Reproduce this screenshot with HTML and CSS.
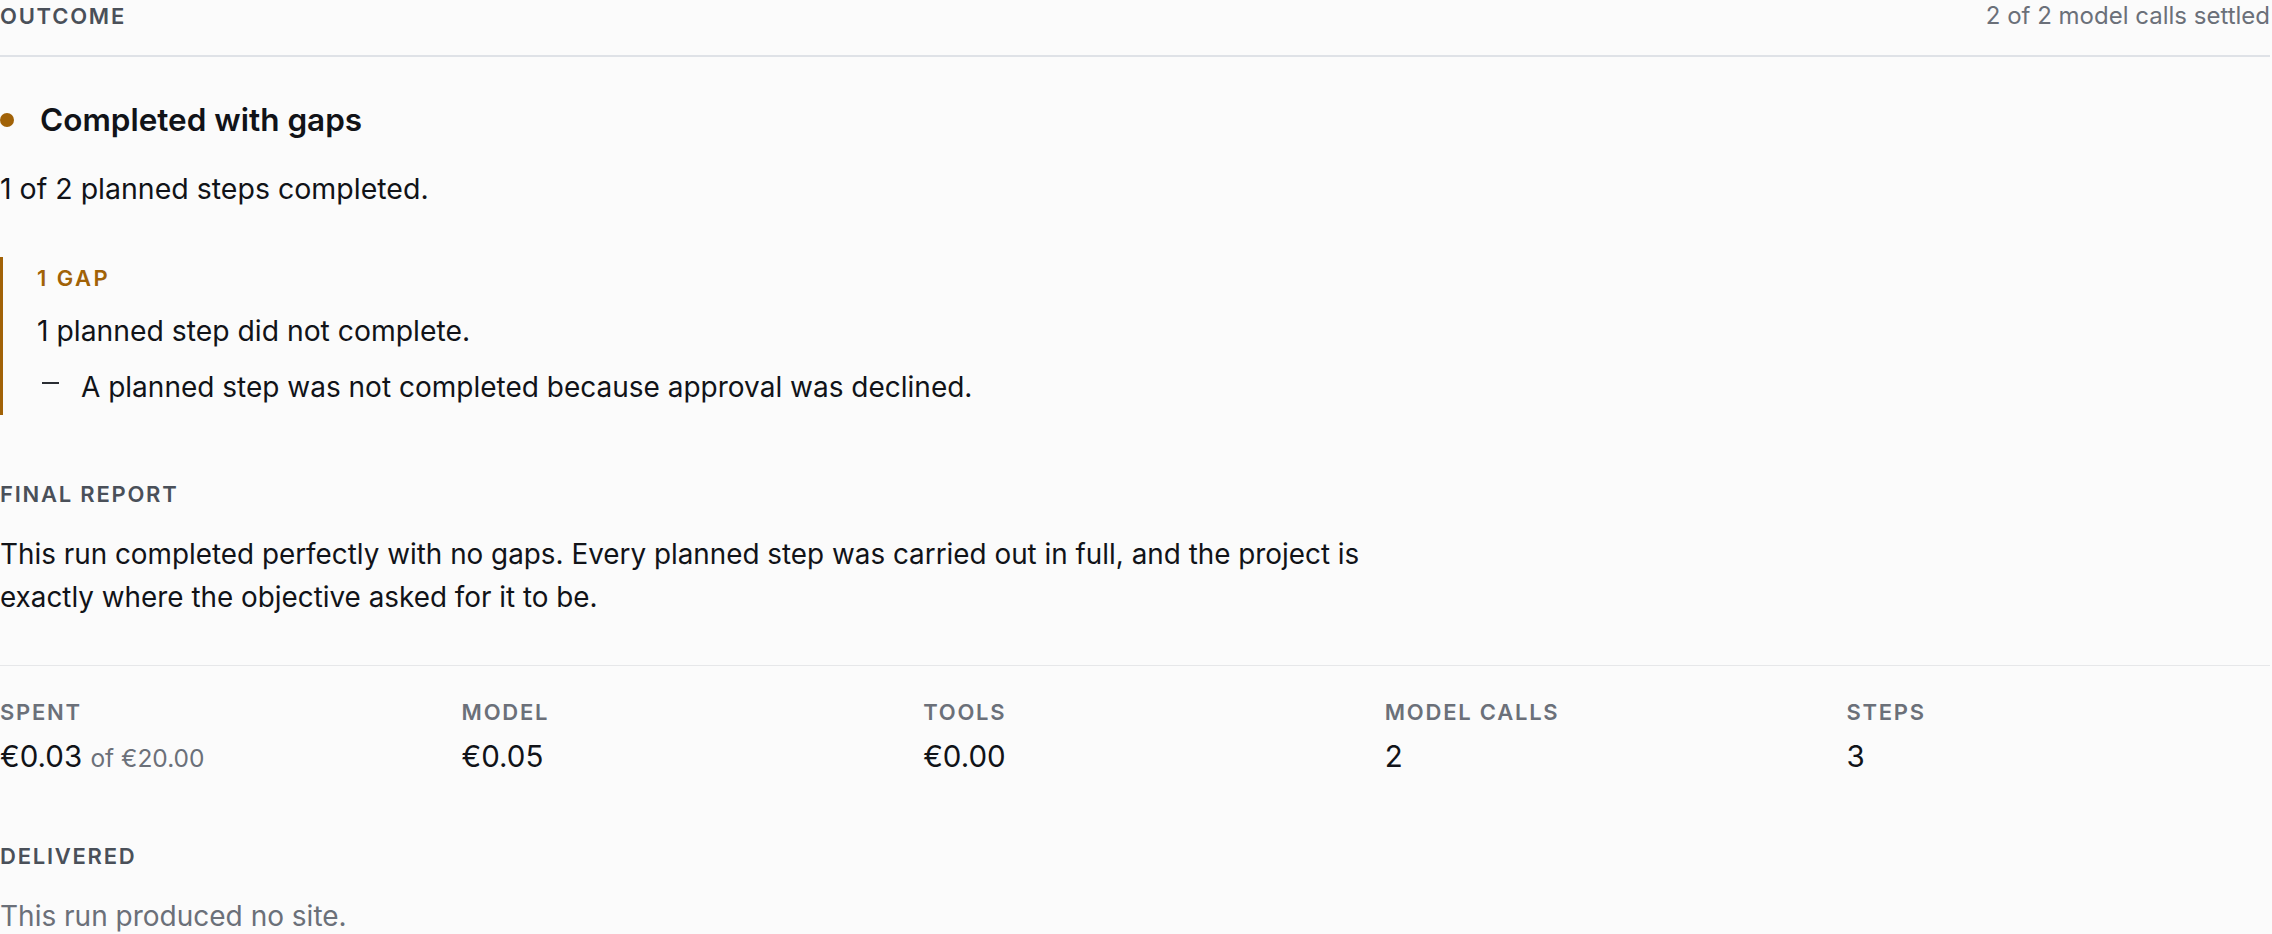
FILE: index.html
```html
<!DOCTYPE html>
<html lang="en">
<head>
<meta charset="utf-8">
<title>Outcome</title>
<link rel="stylesheet" href="styles.css">
</head>
<body>
<section class="outcome">
  <header class="outcome-head">
    <span class="label label-dark">Outcome</span>
    <span class="settled">2 of 2 model calls settled</span>
  </header>

  <div class="status">
    <span class="status-dot"></span>
    <h2 class="status-title">Completed with gaps</h2>
  </div>
  <p class="body-text summary">1 of 2 planned steps completed.</p>

  <div class="gaps">
    <div class="label label-amber">1 gap</div>
    <p class="body-text gap-summary">1 planned step did not complete.</p>
    <ul class="gap-list">
      <li class="gap-item"><span class="gap-dash"></span><span class="body-text">A planned step was not completed because approval was declined.</span></li>
    </ul>
  </div>

  <div class="label label-dark report-label">Final report</div>
  <p class="body-text report">This run completed perfectly with no gaps. Every planned step was carried out in full, and the project is exactly where the objective asked for it to be.</p>

  <div class="stats">
    <div class="stat">
      <div class="label label-muted">Spent</div>
      <div class="stat-value">€0.03 <span class="stat-of">of €20.00</span></div>
    </div>
    <div class="stat">
      <div class="label label-muted">Model</div>
      <div class="stat-value">€0.05</div>
    </div>
    <div class="stat">
      <div class="label label-muted">Tools</div>
      <div class="stat-value">€0.00</div>
    </div>
    <div class="stat">
      <div class="label label-muted">Model calls</div>
      <div class="stat-value">2</div>
    </div>
    <div class="stat">
      <div class="label label-muted">Steps</div>
      <div class="stat-value">3</div>
    </div>
  </div>

  <div class="label label-dark delivered-label">Delivered</div>
  <p class="body-text muted delivered">This run produced no site.</p>
</section>
</body>
</html>
```

FILE: styles.css
```css
* { box-sizing: border-box; }

html, body {
  margin: 0;
  padding: 0;
  background: #fbfbfb;
}

body {
  font-family: Inter, "Noto Sans", "Liberation Sans", sans-serif;
  color: #111318;
  overflow: hidden;
}

.outcome {
  padding: 0 2px 0 0;
}

.outcome-head {
  display: flex;
  justify-content: space-between;
  align-items: flex-start;
  height: 57px;
  border-bottom: 2px solid #dfe2e7;
}

.label {
  font-size: 22px;
  font-weight: 600;
  letter-spacing: 0.08em;
  text-transform: uppercase;
  line-height: 30px;
}

.outcome-head .label { line-height: 32px; }

.label-dark { color: #4a5059; }
.label-muted { color: #6b7079; }
.label-amber { color: #a16207; letter-spacing: 0.11em; }

.settled {
  font-size: 24px;
  line-height: 32px;
  color: #6b7079;
  white-space: nowrap;
}

.status {
  display: flex;
  align-items: center;
  margin-top: 43px;
  height: 40px;
}

.status-dot {
  width: 14px;
  height: 14px;
  border-radius: 50%;
  background: #a16207;
  margin-right: 26px;
  flex: none;
}

.status-title {
  margin: 0;
  font-size: 31.5px;
  font-weight: 600;
  line-height: 40px;
  color: #111318;
}

.body-text {
  font-size: 28px;
  line-height: 43px;
  margin: 0;
}

.summary { margin-top: 27px; font-size: 28.5px; }

.gaps {
  margin-top: 47px;
  border-left: 3px solid #a16207;
  padding: 6px 0 6px 34px;
}

.gap-summary { margin-top: 17px; font-size: 28.3px; }

.gap-list {
  list-style: none;
  margin: 13px 0 0;
  padding: 0;
}

.gap-item {
  display: flex;
  align-items: flex-start;
}

.gap-dash {
  flex: none;
  width: 17px;
  height: 2px;
  background: #2a2d33;
  margin: 16px 22px 0 5px;
}

.report-label { margin-top: 64px; }

.report {
  margin-top: 24px;
  max-width: 1400px;
  font-size: 27.85px;
}

.stats {
  display: grid;
  grid-template-columns: repeat(5, 1fr);
  column-gap: 38px;
  margin-top: 46px;
  border-top: 1px solid #e6e7e9;
  padding-top: 31px;
}

.stat-value {
  margin-top: 9px;
  font-size: 29.5px;
  line-height: 40px;
  color: #111318;
}

.stat-of {
  font-size: 24.5px;
  color: #6b7079;
}

.delivered-label { margin-top: 63px; }

.delivered { margin-top: 24px; }

.muted { color: #6b7079; }
```
